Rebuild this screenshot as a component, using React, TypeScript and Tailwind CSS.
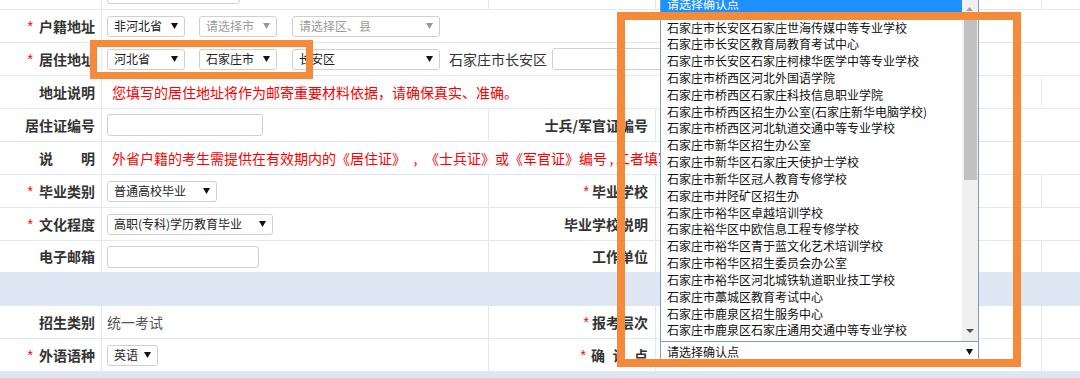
import React from "react";

function Arrow({ gray = false }: { gray?: boolean }) {
  return (
    <svg width="7" height="6" viewBox="0 0 7 6" className="shrink-0">
      <polygon points="0,0 7,0 3.5,6" fill={gray ? "#9a9a9a" : "#111111"} />
    </svg>
  );
}

function Sel({ text, cls, gray = false }: { text: string; cls: string; gray?: boolean }) {
  return (
    <div
      className={`flex h-[21px] shrink-0 items-center justify-between rounded-[3px] border border-[#d0d0d0] bg-white pl-[6px] pr-[6px] text-[12px] leading-none ${
        gray ? "text-[#9a9a9a]" : "text-[#222]"
      } ${cls}`}
    >
      <span className="whitespace-nowrap">{text}</span>
      <Arrow gray={gray} />
    </div>
  );
}

function Input({ cls }: { cls: string }) {
  return <div className={`h-[22px] shrink-0 rounded-[3px] border border-[#d0d0d0] bg-white ${cls}`} />;
}

function Star({ cls }: { cls: string }) {
  return <span className={`font-['Liberation_Sans',sans-serif] font-normal text-[#f00] ${cls}`}>*</span>;
}

function L1({ children, star = false }: { children?: React.ReactNode; star?: boolean }) {
  return (
    <div className="flex w-[102px] shrink-0 items-center justify-end whitespace-nowrap border-r border-[#e2e8f1] pr-[6px] text-[14px] font-bold text-[#333]">
      {star && <Star cls="mr-[6px]" />}
      {children}
    </div>
  );
}

function L2({ children, star = false, gap = "mr-[3px]" }: { children?: React.ReactNode; star?: boolean; gap?: string }) {
  return (
    <div className="flex w-[167px] shrink-0 items-center justify-end whitespace-nowrap border-r border-[#e2e8f1] pr-[7px] text-[14px] font-bold text-[#333]">
      {star && <Star cls={gap} />}
      {children}
    </div>
  );
}

function V1({ children }: { children?: React.ReactNode }) {
  return <div className="flex w-[387px] shrink-0 items-center border-r border-[#e2e8f1] pl-[5px]">{children}</div>;
}

function V2({ children, top = false }: { children?: React.ReactNode; top?: boolean }) {
  return (
    <div
      className={`flex w-[386px] shrink-0 border-r border-[#e2e8f1] pl-[4px] ${top ? "items-start pt-[2px]" : "items-center"}`}
    >
      {children}
    </div>
  );
}

function X() {
  return <div className="flex-1" />;
}

function Row({ children, h = "h-[33px]" }: { children: React.ReactNode; h?: string }) {
  return <div className={`flex ${h} border-b border-[#e2e8f1]`}>{children}</div>;
}

const options = [
  "石家庄市长安区石家庄世海传媒中等专业学校",
  "石家庄市长安区教育局教育考试中心",
  "石家庄市长安区石家庄柯棣华医学中等专业学校",
  "石家庄市桥西区河北外国语学院",
  "石家庄市桥西区石家庄科技信息职业学院",
  "石家庄市桥西区招生办公室(石家庄新华电脑学校)",
  "石家庄市桥西区河北轨道交通中等专业学校",
  "石家庄市新华区招生办公室",
  "石家庄市新华区石家庄天使护士学校",
  "石家庄市新华区冠人教育专修学校",
  "石家庄市井陉矿区招生办",
  "石家庄市裕华区卓越培训学校",
  "石家庄裕华区中欧信息工程专修学校",
  "石家庄市裕华区青于蓝文化艺术培训学校",
  "石家庄市裕华区招生委员会办公室",
  "石家庄市裕华区河北城铁轨道职业技工学校",
  "石家庄市藁城区教育考试中心",
  "石家庄市鹿泉区招生服务中心",
  "石家庄市鹿泉区石家庄通用交通中等专业学校",
];

export default function App() {
  return (
    <div className="relative h-[378px] w-[1080px] overflow-hidden bg-white font-['Noto_Sans_CJK_SC',sans-serif]">
      <div className="-mt-[23px] flex flex-col">
        {/* row 0 */}
        <Row>
          <L1 />
          <V1>
            <Input cls="w-[133px]" />
          </V1>
          <L2 />
          <V2 />
          <X />
        </Row>
        {/* 户籍地址 */}
        <Row>
          <L1 star>户籍地址</L1>
          <div className="flex flex-1 items-center pl-[5px]">
            <Sel text="非河北省" cls="w-[78px]" />
            <Sel text="请选择市" cls="ml-[14px] w-[78px]" gray />
            <Sel text="请选择区、县" cls="ml-[15px] w-[148px]" gray />
          </div>
        </Row>
        {/* 居住地址 */}
        <Row>
          <L1 star>居住地址</L1>
          <div className="flex flex-1 items-center pl-[5px]">
            <Sel text="河北省" cls="w-[78px]" />
            <Sel text="石家庄市" cls="ml-[14px] w-[78px]" />
            <Sel text="长安区" cls="ml-[15px] w-[148px]" />
            <span className="ml-[9px] whitespace-nowrap text-[14px] text-[#333]">石家庄市长安区</span>
            <Input cls="ml-[5px] w-[150px]" />
          </div>
        </Row>
        {/* 地址说明 */}
        <Row>
          <L1>地址说明</L1>
          <div className="flex w-[940px] shrink-0 items-center whitespace-nowrap border-r border-[#e2e8f1] pl-[10px] text-[14px] text-[#f00]">
            您填写的居住地址将作为邮寄重要材料依据，请确保真实、准确。
          </div>
          <X />
        </Row>
        {/* 居住证编号 */}
        <Row>
          <L1>居住证编号</L1>
          <V1>
            <Input cls="w-[156px]" />
          </V1>
          <L2>士兵/军官证编号</L2>
          <div className="flex-1" />
        </Row>
        {/* 说明 */}
        <Row>
          <L1>说　　明</L1>
          <div className="flex flex-1 items-center overflow-hidden whitespace-nowrap pl-[10px] text-[14px] text-[#f00]">
            <span>外省户籍的考生需提供在有效期内的《居住证》</span>
            <span className="inline-block w-[19px] text-center">,</span>
            <span>《士兵证》或《军官证》编号</span>
            <span className="inline-block w-[9px] text-center">,</span>
            <span>二者填写其一。</span>
          </div>
        </Row>
        {/* 毕业类别 */}
        <Row>
          <L1 star>毕业类别</L1>
          <V1>
            <Sel text="普通高校毕业" cls="w-[110px]" />
          </V1>
          <L2 star>毕业学校</L2>
          <V2 />
          <X />
        </Row>
        {/* 文化程度 */}
        <Row>
          <L1 star>文化程度</L1>
          <V1>
            <Sel text="高职(专科)学历教育毕业" cls="w-[166px]" />
          </V1>
          <L2>毕业学校说明</L2>
          <div className="flex-1" />
        </Row>
        {/* 电子邮箱 */}
        <Row h="h-[32px]">
          <L1>电子邮箱</L1>
          <V1>
            <Input cls="w-[152px]" />
          </V1>
          <L2>工作单位</L2>
          <V2 />
          <X />
        </Row>
        <div className="h-[33px] bg-[#dde6f2]" />
        {/* 招生类别 */}
        <Row>
          <L1>招生类别</L1>
          <V1>
            <span className="text-[14px] text-[#555]">统一考试</span>
          </V1>
          <L2 star gap="mr-[3px]">报考层次</L2>
          <V2 />
          <X />
        </Row>
        {/* 外语语种 */}
        <Row>
          <L1 star>外语语种</L1>
          <V1>
            <Sel text="英语" cls="w-[51px]" />
          </V1>
          <L2 star gap="mr-[5px]">
            <span className="inline-flex gap-[7.5px]">
              <span>确</span>
              <span>认</span>
              <span>点</span>
            </span>
          </L2>
          <V2 top>
            <div className="flex h-[22px] w-[319px] items-center justify-between border border-[#7f9db9] bg-white pl-[6px] pr-[5px] text-[12px] leading-none text-[#111]">
              <span>请选择确认点</span>
              <Arrow />
            </div>
          </V2>
          <X />
        </Row>
        <div className="h-[20px] bg-[#dde6f2]" />
      </div>

      {/* open dropdown list */}
      <div className="absolute left-[660px] top-[-6px] flex h-[348px] w-[319px] border border-[#7f9db9] bg-white">
        <div className="flex flex-1 flex-col overflow-hidden">
          <div className="h-[24.5px] shrink-0 bg-[#1e90ff] pl-[6px] text-[12px] leading-[17px] text-white">请选择确认点</div>
          {options.map((o) => (
            <div key={o} className="h-[16.83px] shrink-0 whitespace-nowrap pl-[6px] text-[12px] leading-[16.83px] text-[#111]">
              {o}
            </div>
          ))}
        </div>
        <div className="relative w-[16px] shrink-0 bg-[#f0f0f0]">
          <svg width="7" height="4" viewBox="0 0 7 4" className="absolute left-[4px] top-[12px]">
            <polygon points="0,4 7,4 3.5,0" fill="#a0a0a0" />
          </svg>
          <div className="absolute left-[2px] top-[25px] h-[160px] w-[13px] bg-[#c1c1c1]" />
          <svg width="8" height="4" viewBox="0 0 8 4" className="absolute bottom-[8px] left-[4px]">
            <polygon points="0,0 8,0 4,4" fill="#505050" />
          </svg>
        </div>
      </div>

      {/* orange highlight frames */}
      <div className="absolute left-[90px] top-[40px] h-[39px] w-[223px] border-[7px] border-[#f58a3b]" />
      <div className="absolute left-[617px] top-[12px] h-[355px] w-[404px] border-[8px] border-[#f58a3b]" />
    </div>
  );
}
